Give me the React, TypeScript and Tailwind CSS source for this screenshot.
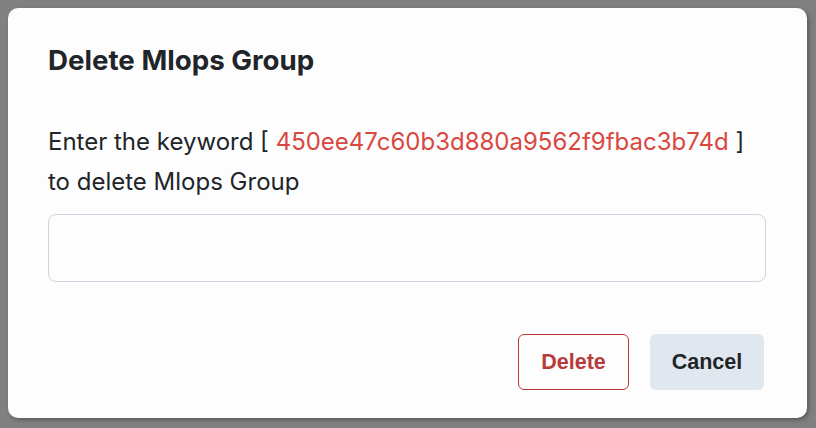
export default function App() {
  return (
    <div className="flex h-[428px] w-[816px] bg-[#808080] p-2 font-['Inter',sans-serif]">
      <div className="flex h-[410px] w-[799px] flex-col rounded-[10px] bg-[#fdfdfe] px-10 pb-7 pt-[35px] text-[#212529] shadow-[2px_2px_4px_rgba(0,0,0,0.3)]">
        <h2 className="text-[27.7px] font-bold leading-[34px]">Delete Mlops Group</h2>
        <p className="mt-[45px] text-[24px] leading-[40px]">
          Enter the keyword [ <span className="text-[#d9483f]">450ee47c60b3d880a9562f9fbac3b74d</span> ]
          <br />
          to delete Mlops Group
        </p>
        <input
          type="text"
          className="mt-[12px] h-[68px] w-[718px] rounded-lg border border-[#cbd5e1] bg-transparent px-4 text-[20px] outline-none"
        />
        <div className="mt-auto flex justify-end gap-[21px] pr-[3px]">
          <button className="h-[56px] w-[111px] rounded-md border border-[#b83a3a] bg-transparent font-['Liberation_Sans',sans-serif] text-[21.5px] font-bold text-[#b83a3a]">
            Delete
          </button>
          <button className="h-[56px] w-[114px] rounded-md bg-[#e1e7ef] font-['Liberation_Sans',sans-serif] text-[21.5px] font-bold text-[#212529]">
            Cancel
          </button>
        </div>
      </div>
    </div>
  );
}
